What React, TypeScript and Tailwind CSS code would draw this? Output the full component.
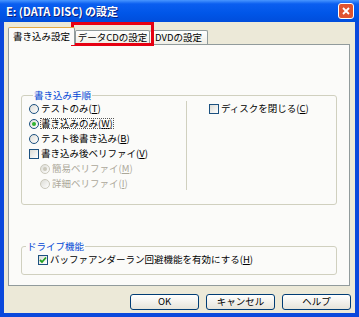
import React from "react";

const font = "font-['Noto_Sans_CJK_JP','Noto_Sans',sans-serif]";

const Radio = ({ checked, disabled }: { checked?: boolean; disabled?: boolean }) => (
  <span
    className={`w-[10px] h-[10px] rounded-full border flex items-center justify-center bg-gradient-to-br from-[#dcdcd6] to-white ${
      disabled ? "border-[#cac8bb]" : "border-[#1c5180]"
    }`}
  >
    {checked && (
      <span className={`w-[4px] h-[4px] rounded-full ${disabled ? "bg-[#cac8bb]" : "bg-[#2fb22f]"}`} />
    )}
  </span>
);

const Check = ({ checked }: { checked?: boolean }) => (
  <span className="w-[10px] h-[10px] border border-[#1c5180] bg-gradient-to-br from-[#dcdcd6] to-white flex items-center justify-center">
    {checked && (
      <svg width="8" height="8" viewBox="0 0 8 8">
        <path d="M1 4 L3 6 L7 1.5" stroke="#21a121" strokeWidth="1.8" fill="none" />
      </svg>
    )}
  </span>
);

const Row = ({ children, className = "" }: { children: React.ReactNode; className?: string }) => (
  <div className={`h-[15px] flex items-center gap-[2px] ${className}`}>{children}</div>
);

const Btn = ({ label }: { label: React.ReactNode }) => (
  <div className="w-[69px] h-[16px] border border-[#003c74] rounded-[3px] bg-gradient-to-b from-white to-[#e6e4da] flex items-center justify-center text-[9.5px] leading-none">
    {label}
  </div>
);

const App = () => {
  return (
    <div className={`relative w-[359px] h-[317px] flex flex-col bg-[#0a48dc] text-black ${font}`}>
      {/* title bar */}
      <div className="h-[22px] flex items-center justify-between pl-[6px] pr-[5px] bg-[linear-gradient(180deg,#4896ff_0%,#0a5ef0_18%,#0056e8_60%,#004ddb_100%)]">
        <span className="text-white font-bold text-[11px] leading-none [text-shadow:1px_1px_0_#0a1e80]">
          E: (DATA DISC) の設定
        </span>
        <div className="w-[16px] h-[16px] rounded-[3px] border border-white bg-[#e0532f] flex items-center justify-center">
          <svg width="10" height="10" viewBox="0 0 10 10">
            <path d="M2 2 L8 8 M8 2 L2 8" stroke="white" strokeWidth="1.8" />
          </svg>
        </div>
      </div>

      {/* body */}
      <div className="flex-1 flex flex-col ml-[4px] mr-[4px] bg-[#ece9d8]">
        <div className="h-[22px] pt-[5px] pl-[4px] flex items-end">
          <div className="relative z-10 -mb-px w-[67px] h-[18px] bg-[#fbfbf9] border border-b-0 border-[#919b9c] border-t-[#e3a843] rounded-t-[2px] flex items-center justify-center text-[9.5px] leading-none">
            書き込み設定
          </div>
          <div className="w-[75px] h-[14px] bg-gradient-to-b from-white to-[#efeee6] border border-b-0 border-[#919b9c] rounded-t-[2px] flex items-center justify-center text-[9.5px] leading-none">
            データCDの設定
          </div>
          <div className="w-[58px] h-[14px] bg-gradient-to-b from-white to-[#efeee6] border border-b-0 border-l-0 border-[#919b9c] rounded-t-[2px] flex items-center justify-center text-[9.5px] leading-none">
            DVDの設定
          </div>
        </div>

        {/* tab panel */}
        <div className="ml-[4px] mr-[5px] h-[242px] border border-[#919b9c] bg-[#fbfbf9] flex flex-col px-[12px] text-[9.5px] leading-none">
          <fieldset className="mt-[44px] border border-[#d0d0bf] rounded-[3px] pl-[7px] pb-[14px] h-[116px]">
            <legend className="ml-[4px] px-[1px] text-[#0046d5] h-[12px] leading-[12px]">書き込み手順</legend>
            <div className="flex">
              <div className="w-[157px] flex flex-col">
                <Row>
                  <Radio />
                  <span>テストのみ(<u>T</u>)</span>
                </Row>
                <Row>
                  <Radio checked />
                  <span className="outline outline-1 outline-dotted outline-[#555]">書き込みのみ(<u>W</u>)</span>
                </Row>
                <Row>
                  <Radio />
                  <span>テスト後書き込み(<u>B</u>)</span>
                </Row>
                <Row>
                  <Check />
                  <span>書き込み後ベリファイ(<u>V</u>)</span>
                </Row>
                <Row className="ml-[11px] text-[#aca899]">
                  <Radio checked disabled />
                  <span>簡易ベリファイ(<u>M</u>)</span>
                </Row>
                <Row className="ml-[11px] text-[#aca899]">
                  <Radio disabled />
                  <span>詳細ベリファイ(<u>I</u>)</span>
                </Row>
              </div>
              <div className="w-px h-[89px] bg-[#d0d0bf]" />
              <div className="pl-[22px]">
                <Row>
                  <Check />
                  <span>ディスクを閉じる(<u>C</u>)</span>
                </Row>
              </div>
            </div>
          </fieldset>

          <fieldset className="mt-[35px] border border-[#d0d0bf] rounded-[3px] pl-[16px] h-[35px]">
            <legend className="ml-[-12px] px-[1px] text-[#0046d5] h-[12px] leading-[12px]">ドライブ機能</legend>
            <Row>
              <Check checked />
              <span>バッファアンダーラン回避機能を有効にする(<u>H</u>)</span>
            </Row>
          </fieldset>
        </div>

        <div className="mt-[8px] flex justify-end gap-[7px] pr-[4px]">
          <Btn label="OK" />
          <Btn label="キャンセル" />
          <Btn label="ヘルプ" />
        </div>
      </div>
      <div className="h-[4px]" />

      {/* red highlight */}
      <div className="absolute left-[71px] top-[22px] w-[83px] h-[24px] border-[3px] border-[#e60012]" />
    </div>
  );
};

export default App;
